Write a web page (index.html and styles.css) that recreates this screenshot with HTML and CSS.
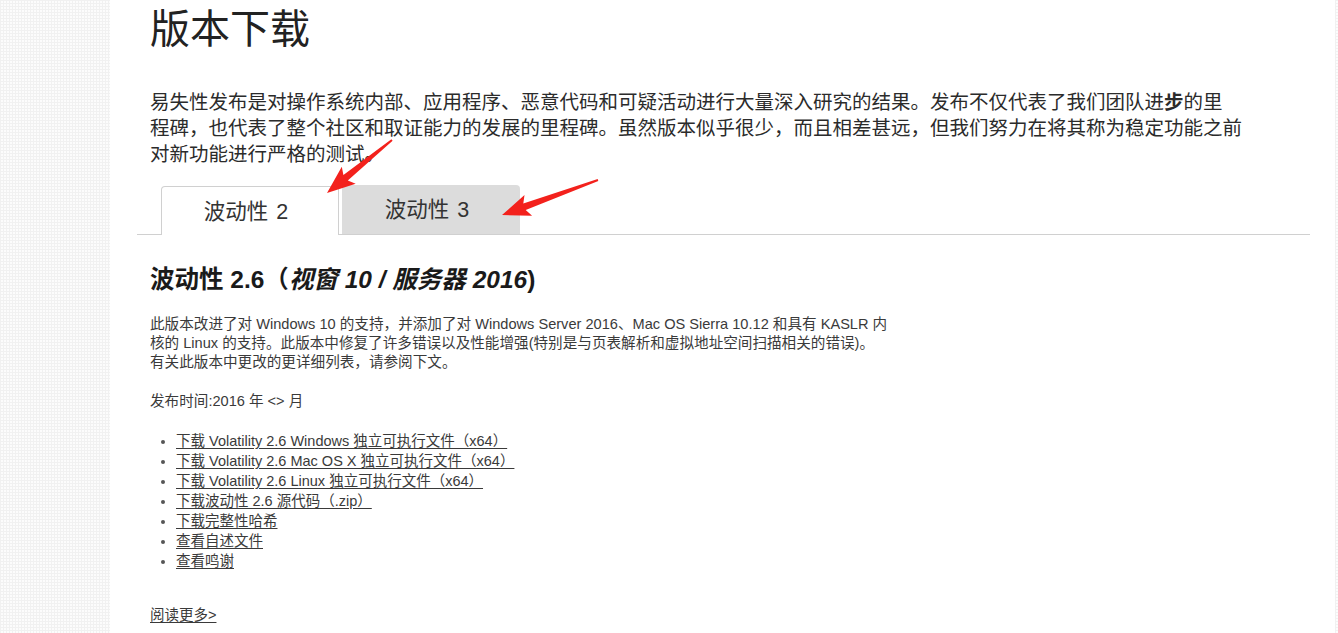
FILE: index.html
```html
<!DOCTYPE html>
<html lang="zh-CN">
<head>
<meta charset="utf-8">
<title>版本下载</title>
<link rel="stylesheet" href="styles.css">
</head>
<body>
<div class="page">
  <aside class="side side-left"></aside>
  <main class="main">
    <h1 class="title">版本下载</h1>
    <p class="intro">易失性发布是对操作系统内部、应用程序、恶意代码和可疑活动进行大量深入研究的结果。发布不仅代表了我们团队进<b>步</b>的里<br>程碑，也代表了整个社区和取证能力的发展的里程碑。虽然版本似乎很少，而且相差甚远，但我们努力在将其称为稳定功能之前<br>对新功能进行严格的测试。</p>
    <div class="tabs">
      <div class="tab tab-active">波动性 2</div>
      <div class="tab tab-inactive">波动性 3</div>
    </div>
    <section class="panel">
      <h2 class="release-title">波动性 2.6（<em>视窗 10 / 服务器 2016</em>)</h2>
      <p class="text">此版本改进了对 Windows 10 的支持，并添加了对 Windows Server 2016、Mac OS Sierra 10.12 和具有 KASLR 内<br>核的 Linux 的支持。此版本中修复了许多错误以及性能增强(特别是与页表解析和虚拟地址空间扫描相关的错误)。<br>有关此版本中更改的更详细列表，请参阅下文。</p>
      <p class="text">发布时间:2016 年 &lt;&gt; 月</p>
      <ul class="downloads">
        <li><a href="#">下载 Volatility 2.6 Windows 独立可执行文件（x64）</a></li>
        <li><a href="#">下载 Volatility 2.6 Mac OS X 独立可执行文件（x64）</a></li>
        <li><a href="#">下载 Volatility 2.6 Linux 独立可执行文件（x64）</a></li>
        <li><a href="#">下载波动性 2.6 源代码（.zip）</a></li>
        <li><a href="#">下载完整性哈希</a></li>
        <li><a href="#">查看自述文件</a></li>
        <li><a href="#">查看鸣谢</a></li>
      </ul>
      <a class="more" href="#">阅读更多&gt;</a>
    </section>
  </main>
  <aside class="side side-right"></aside>
  <svg class="annotations" width="1338" height="633" viewBox="0 0 1338 633" aria-hidden="true">
    <polygon class="arrow" points="392.6,140.8 347.8,180.5 355.7,183.8 327,193 341.8,166.8 343.4,175.1 391.4,139.2"/>
    <polygon class="arrow" points="598.3,180.9 525.7,210.1 532.1,215.8 502,215 524.5,195.1 523.3,203.5 597.7,179.1"/>
  </svg>
</div>
</body>
</html>
```
FILE: styles.css
```css
html, body {
  margin: 0;
  padding: 0;
  background: #ffffff;
}

body {
  font-family: "Liberation Sans", "Noto Sans CJK SC", sans-serif;
  color: #333333;
}

.page {
  position: relative;
  display: flex;
  width: 1338px;
  min-height: 633px;
  overflow: hidden;
}

.side {
  flex: none;
  background-color: #fcfcfc;
  background-image:
    linear-gradient(#f1f1f1 1px, transparent 1px),
    linear-gradient(90deg, #f1f1f1 1px, transparent 1px);
  background-size: 3px 3px;
}

.side-left {
  width: 110px;
}

.side-right {
  width: 3px;
}

.main {
  flex: 1;
  padding: 0 25px 0 27px;
  background: #ffffff;
}

.title {
  margin: 5px 0 0;
  padding-left: 13px;
  font-size: 40px;
  line-height: 48px;
  font-weight: normal;
  color: #222222;
}

.intro {
  margin: 36px 0 0;
  padding-left: 13px;
  font-size: 19.5px;
  line-height: 26px;
  color: #2b2b2b;
  white-space: nowrap;
}

.intro b {
  font-weight: bold;
}

.tabs {
  display: flex;
  align-items: flex-end;
  margin-top: 18px;
  padding-left: 24px;
  border-bottom: 1px solid #d0d0d0;
}

.tab {
  box-sizing: border-box;
  width: 178px;
  height: 49px;
  padding-bottom: 4px;
  display: flex;
  align-items: center;
  justify-content: center;
  font-size: 21.5px;
  word-spacing: 2px;
  color: #333333;
  border-radius: 4px 4px 0 0;
}

.tab-active {
  background: #ffffff;
  border: 1px solid #d0d0d0;
  border-bottom: none;
  margin-bottom: -1px;
  padding-right: 8px;
}

.tab-inactive {
  background: #dcdcdc;
  margin-left: 3px;
  padding-right: 8px;
}

.panel {
  padding-left: 13px;
}

.release-title {
  margin: 30px 0 0;
  font-size: 24.5px;
  line-height: 30px;
  font-weight: bold;
  color: #1a1a1a;
}

.release-title em {
  font-style: italic;
}

.text {
  margin: 20px 0 0;
  font-size: 14.6px;
  line-height: 19px;
  color: #3a3a3a;
  white-space: nowrap;
}

.downloads {
  margin: 20px 0 0;
  padding-left: 26px;
  font-size: 14.5px;
  line-height: 20px;
  color: #555555;
}

.downloads a,
.more {
  color: #3a3a3a;
  text-decoration: underline;
  text-underline-offset: 2px;
}

.more {
  display: inline-block;
  margin-top: 35px;
  font-size: 14.5px;
  line-height: 19px;
}

.annotations {
  position: absolute;
  top: 0;
  left: 0;
  pointer-events: none;
}

.arrow {
  fill: #f3211c;
}
```
